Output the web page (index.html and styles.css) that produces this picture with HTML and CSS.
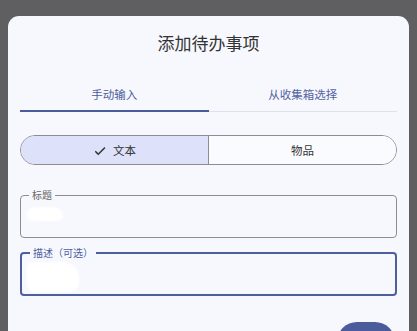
FILE: index.html
```html
<!DOCTYPE html>
<html lang="zh-CN">
<head>
    <meta charset="UTF-8">
    <meta name="viewport" content="width=device-width, initial-scale=1.0">
    <title>添加待办事项</title>
    <link rel="stylesheet" href="styles.css">
</head>
<body>
    <div class="dialog">
        <h1>添加待办事项</h1>

        <div class="tabs">
            <div class="tab active">手动输入</div>
            <div class="tab">从收集箱选择</div>
        </div>

        <div class="segmented">
            <div class="seg selected">
                <svg class="check" width="14" height="14" viewBox="0 0 24 24"><path d="M9 16.2L4.8 12l-1.4 1.4L9 19 21 7l-1.4-1.4z" fill="#222" stroke="#222" stroke-width="0.6"/></svg>
                <span>文本</span>
            </div>
            <div class="seg">物品</div>
        </div>

        <fieldset class="field">
            <legend>标题</legend>
            <div class="mask mask-title"></div>
        </fieldset>

        <fieldset class="field focused">
            <legend>描述（可选）</legend>
            <div class="mask mask-desc"></div>
        </fieldset>

        <div class="actions">
            <button class="btn" aria-label="添加"></button>
        </div>
    </div>
</body>
</html>
```

FILE: styles.css
```css
html, body {
    height: 100%;
}
body {
    margin: 0;
    background: #5f5f61;
    font-family: "Noto Sans CJK SC", "Noto Sans", sans-serif;
    overflow: hidden;
}
.dialog {
    margin: 16px 8px 0;
    background: #f7f8fe;
    border-radius: 11px;
    padding: 16px 12px 0;
    height: 400px;
}
h1 {
    margin: 0;
    text-align: center;
    font-size: 17px;
    line-height: 22px;
    font-weight: 400;
    color: #333;
}
.tabs {
    display: flex;
    margin-top: 20px;
    border-bottom: 1px solid #e0e1e8;
}
.tab {
    flex: 1;
    text-align: center;
    font-size: 11.5px;
    line-height: 16px;
    padding: 12px 0 8px;
    color: #5564a0;
    border-bottom: 2px solid transparent;
    margin-bottom: -1px;
}
.tab.active {
    border-bottom-color: #4a5c9c;
    color: #4a5c9c;
}
.segmented {
    display: flex;
    margin-top: 23px;
    height: 30px;
    border: 1px solid #8c8c94;
    border-radius: 16px;
    overflow: hidden;
    box-sizing: border-box;
}
.seg {
    flex: 1;
    display: flex;
    align-items: center;
    justify-content: center;
    gap: 6px;
    font-size: 11.5px;
    color: #333;
    background: #fafbff;
}
.seg.selected {
    background: #dde1f9;
    border-right: 1px solid #8c8c94;
}
.check {
    margin-top: 1px;
}
.field {
    margin: 24px 0 0;
    padding: 0 6px;
    border: 1px solid #8d8d92;
    border-radius: 4px;
    height: 49px;
    box-sizing: border-box;
    min-width: 0;
}
.field legend {
    margin-left: 2px;
    padding: 0 3px;
    font-size: 10px;
    line-height: 12px;
    color: #666;
}
.field.focused {
    margin-top: 9px;
    border: 2px solid #4d5f9e;
    padding: 0 5px;
}
.field.focused legend {
    margin-left: 3px;
    color: #4d5f9e;
}
.mask {
    background: #fff;
    filter: blur(1px);
}
.mask-title {
    width: 36px;
    height: 14px;
    margin-top: 6px;
    border-radius: 7px 9px 5px 6px;
}
.mask-desc {
    width: 52px;
    height: 30px;
    margin-top: 3px;
    border-radius: 6px 16px 10px 8px;
}
.actions {
    display: flex;
    justify-content: flex-end;
    margin-top: 26px;
}
.btn {
    background: #4a5c9c;
    border: none;
    border-radius: 20px;
    height: 40px;
    width: 58px;
    margin-right: 2px;
}
```
